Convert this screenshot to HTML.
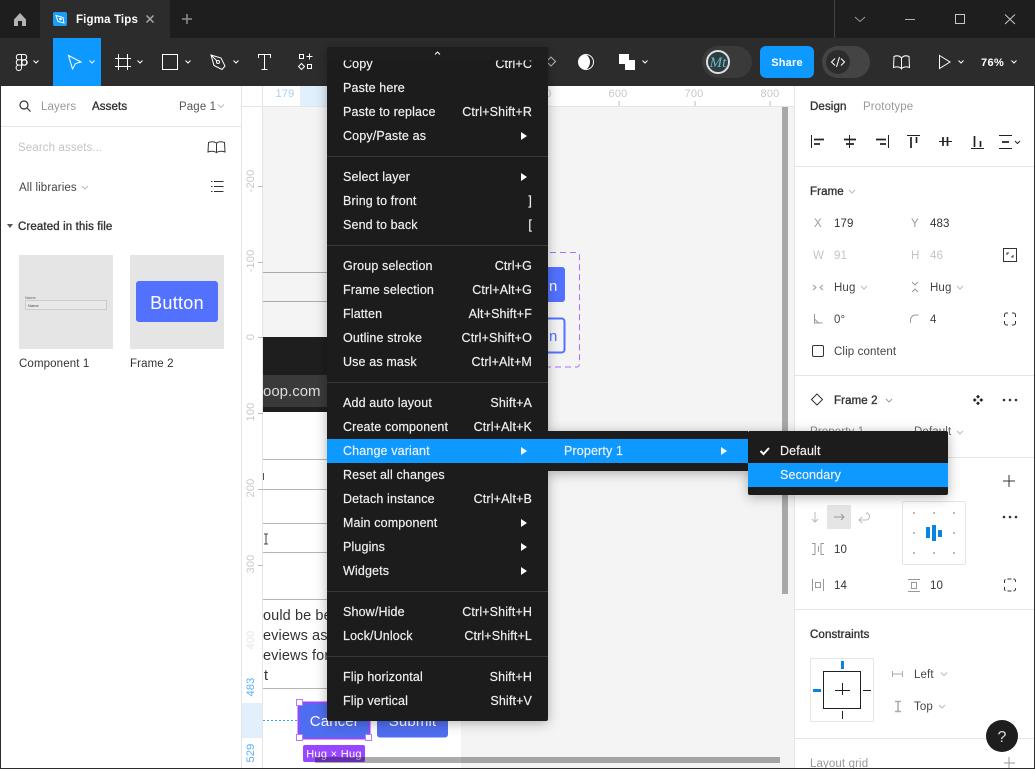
<!DOCTYPE html>
<html><head><meta charset="utf-8"><style>
html,body{margin:0;padding:0;background:#fff;width:1035px;height:769px;overflow:hidden}
svg{display:block;position:absolute;left:0;top:0}
text{font-family:"Liberation Sans",sans-serif;font-size:11.5px;letter-spacing:.12px;fill:#333}
.m{font-size:12.5px;letter-spacing:.14px;fill:#f0f0f0;stroke:#f0f0f0;stroke-width:.18px}
.e{text-anchor:end}
.g{fill:#999}
.lg{fill:#c4c4c4}
.b{stroke:#333;stroke-width:.35px;fill:#333}
.wb{font-weight:bold;fill:#fff}
.w{fill:#fff}
.c{fill:none;stroke:#fff;stroke-width:1}
.d{fill:none;stroke:#333;stroke-width:1}
.gc{fill:none;stroke:#999;stroke-width:1}
.lc{fill:none;stroke:#bbb;stroke-width:1}
.r{font-size:11px;fill:#c8c8c8;letter-spacing:.2px;text-anchor:middle}
.rb{font-size:11px;fill:#5bb0f5;letter-spacing:.2px;text-anchor:middle}
.f{font-size:14.5px;letter-spacing:.1px;fill:#333}
.s{fill:#ccc;}
</style></head><body>
<svg width="1035" height="769" viewBox="0 0 1035 769">
<defs><filter id="sh" x="-10%" y="-10%" width="120%" height="120%"><feDropShadow dx="0" dy="2" stdDeviation="6" flood-color="#000" flood-opacity=".3"/></filter></defs>
<!-- chrome -->
<rect width="1035" height="769" fill="#fff"/>
<rect width="1035" height="38" fill="#1e1e1e"/>
<rect x="40" width="130" height="38" fill="#2c2c2c"/>
<rect y="38" width="1035" height="48" fill="#2c2c2c"/>
<path d="M14 19.500 20 13l6 6.500V26h-4v-5h-4v5h-4z" fill="#b3b3b3"/>
<rect x="53" y="12" width="14" height="14" rx="2" fill="#1a9ef5"/>
<path d="M56 15.500 63 17.500 64 23 58 21.500Z" fill="none" stroke="#fff" stroke-width="1"/><circle cx="60.500" cy="19" r="1.300" fill="#fff"/>
<text x="76" y="23" class="wb" style="font-size:11.500px;letter-spacing:.15px">Figma Tips</text>
<path d="M146.500 15.500l7 7m0-7-7 7" fill="none" stroke="#a8a8a8" stroke-width="1.500"/>
<path d="M187 14v10m-5-5h10" fill="none" stroke="#8f8f8f" stroke-width="1.500"/>
<path d="M834.500 0v38" stroke="#444" stroke-width="1"/>
<path d="M855 17l5 4.500 5-4.500" fill="none" stroke="#9a9a9a"/>
<path d="M905 19.500h10" stroke="#b3b3b3"/>
<rect x="955.500" y="14.500" width="9" height="9" fill="none" stroke="#c8c8c8"/>
<path d="M1005 14.500l10 9.500m0-9.500-10 9.500" fill="none" stroke="#c8c8c8"/>

<!-- toolbar -->
<rect x="53" y="38" width="48" height="48" fill="#0d99ff"/>
<path class="c" d="M18.500 54.500h6a2.700 2.700 0 0 1 0 5.300h-6a2.700 2.700 0 0 1 0-5.300zM18.500 59.800h6a2.700 2.700 0 0 1 0 5.300h-6a2.700 2.700 0 0 1 0-5.300zM21.500 54.500v10.600M21.500 65.100v2.600a2.700 2.700 0 1 1-3-2.600z"/><circle class="c" cx="24.500" cy="62.500" r="2.700"/>
<path class="c" d="M33.500 60.500l2.500 2.500 2.500-2.500M89.500 60.500l2.500 2.500 2.500-2.500M137.500 60.500l2.500 2.500 2.500-2.500M185.500 60.500l2.500 2.500 2.500-2.500M233.500 60.500l2.500 2.500 2.500-2.500"/>
<path class="c" d="M68.500 55.500 81 62l-5.500 1.500-3 5.500z"/>
<path class="c" d="M118.500 54v16M127.500 54v16M115 58.500h16M115 66.500h16"/>
<rect class="c" x="162.500" y="54.500" width="15" height="15"/>
<path class="c" d="M211 55l10 3 4 8-3 3.500-8-4zM211 55l6 6"/><circle class="c" cx="218" cy="62" r="1.500"/>
<path class="c" d="M258.500 58v-3.500h12V58M264.500 54.500V70M261.500 69.500h6"/>
<rect class="c" x="299.500" y="54.500" width="4" height="4"/><path class="c" d="M309.500 53.500v6M306.500 56.500h6"/><path class="c" d="M301.500 63.500l3 3-3 3-3-3z"/><rect class="c" x="307.500" y="64.500" width="4" height="4"/>
<path class="c" d="M551 57l4.500 4.500-4.500 4.500-4.500-4.500z" style="stroke:#bbb"/>
<circle cx="586" cy="62" r="7.500" fill="none" stroke="#fff"/><path d="M586 54.500a7.500 7.500 0 0 0 0 15 9 9 0 0 0 0-15z" fill="#fff"/>
<path d="M619 54h10v6h6v10h-10v-6h-6z" fill="#fff"/>
<path class="c" d="M642.500 60.500l2.500 2.500 2.500-2.500M738.500 60.500l2.500 2.500 2.500-2.500M958.500 60.500l2.500 2.500 2.500-2.500M1011.500 60.500l2.500 2.500 2.500-2.500"/>
<rect x="702" y="46" width="50" height="32" rx="16" fill="#3a3a3a"/>
<circle cx="718" cy="62" r="11" fill="#2e3d40" stroke="#e0e0e0" stroke-width="2"/>
<text x="718" y="67" text-anchor="middle" style="font-family:'Liberation Serif',serif;font-style:italic;font-size:15px;letter-spacing:0;fill:#6fb8c6">Mt</text>
<rect x="760" y="46" width="54" height="32" rx="6" fill="#0d99ff"/>
<text x="787" y="66" text-anchor="middle" class="wb" style="font-size:11px;letter-spacing:.2px">Share</text>
<rect x="822" y="46" width="48" height="32" rx="16" fill="#444"/>
<circle cx="838" cy="62" r="12" fill="#2c2c2c"/>
<path class="c" d="M835 58.500l-3.500 3.500 3.500 3.500M841 58.500l3.500 3.500-3.500 3.500M839.500 57l-3 10"/>
<path class="c" d="M901.500 58c-2-2.500-5-2.500-7.500-1.500l-.5 11c2.500-1 6-1 8 1zM901.500 58c2-2.500 5-2.500 7.500-1.500l.5 11c-2.500-1-6-1-8 1z"/>
<path class="c" d="M939.500 55.500 950 62l-10.500 6.500z"/>
<text x="981" y="66" class="wb" style="font-size:11px;letter-spacing:.4px">76%</text>

<!-- left panel -->
<rect x="0" y="86" width="1" height="683" fill="#2c2c2c"/>
<rect x="241" y="86" width="1" height="683" fill="#e5e5e5"/>
<path d="M1 126.500h240" stroke="#e5e5e5"/>
<circle cx="24" cy="105" r="4" class="d" style="stroke-width:1.200"/><path d="M27 108l3.500 3.500" class="d" style="stroke-width:1.200"/>
<text x="41" y="110" class="g">Layers</text>
<text x="92" y="110" class="b">Assets</text>
<text x="179" y="110" style="fill:#555">Page 1</text>
<path class="lc" d="M218 104.500l3 3 3-3"/>
<text x="18" y="151" class="lg">Search assets...</text>
<path class="d" d="M216.500 143c-2-1.500-5-1.500-8-.5l-.5 9.500c3-1 6-1 8.500.5zM216.500 143c2-1.500 5-1.500 8-.5l.5 9.500c-3-1-6-1-8.500.5z"/>
<text x="19" y="191" style="fill:#444">All libraries</text>
<path class="lc" d="M82 186l3 3 3-3"/>
<path class="d" d="M214 181.500h9.500M214 186.500h9.500M214 191.500h9.500M211 181.500h1.500M211 186.500h1.500M211 191.500h1.500"/>
<path d="M7 224h6l-3 4z" fill="#555"/>
<text x="18" y="230" class="b">Created in this file</text>
<rect x="19" y="255" width="94" height="94" fill="#e5e5e5"/>
<rect x="130" y="255" width="94" height="94" fill="#e5e5e5"/>
<text x="25" y="299" style="font-size:4px;letter-spacing:0;fill:#666">Name</text>
<rect x="25.500" y="300.500" width="81" height="9" fill="#e8e8e8" stroke="#ccc"/>
<text x="28" y="307" style="font-size:4px;letter-spacing:0;fill:#444">Name</text>
<rect x="136" y="281" width="82" height="41" rx="3" fill="#5271ff"/>
<text x="177" y="309" text-anchor="middle" style="font-size:18px;letter-spacing:.3px;fill:#fff">Button</text>
<text x="19" y="367">Component 1</text>
<text x="130" y="367">Frame 2</text>

<!-- canvas -->
<rect x="263" y="106" width="531" height="663" fill="#f4f4f4"/>
<path d="M263 272.500h198M263 301.500h198" stroke="#aaa"/>
<rect x="263" y="337" width="198" height="75" fill="#1e1e1e"/>
<rect x="263" y="375" width="198" height="32" fill="#3a3a3a"/>
<text x="263" y="396" style="font-size:15px;fill:#ddd;letter-spacing:0">oop.com</text>
<rect x="263" y="412" width="198" height="357" fill="#fff"/>
<path d="M263 459.500h198M263 489.500h198M263 523.500h198M263 552.500h198M263 599.500h198M263 688.500h198" stroke="#b5b5b5"/>
<rect x="263" y="473" width="1" height="7" fill="#555"/>
<path d="M264 534h4M266 534v10M264 544h4" stroke="#444" fill="none"/>
<text x="263" y="620" class="f">ould be be</text>
<text x="263" y="640" class="f">eviews as</text>
<text x="263" y="660" class="f">eviews for</text>
<text x="264" y="680" class="f">t</text>
<!-- purple group -->
<path d="M530 252.500h46a3 3 0 0 1 3.500 3.500v108a3 3 0 0 1-3.500 3h-46" fill="none" stroke="#ad6bff" stroke-dasharray="6 4"/>
<rect x="520" y="267" width="45" height="35" rx="3" fill="#5271ff"/>
<text x="549" y="291" class="w" style="font-size:15px">n</text>
<rect x="520" y="318.500" width="44.500" height="34" rx="3" fill="none" stroke="#5271ff" stroke-width="2"/>
<text x="549" y="341" style="font-size:15px;fill:#5271ff">n</text>
<!-- bottom buttons -->
<path d="M263 720.500h35" stroke="#3aa6f5" stroke-dasharray="2 2"/>
<rect x="298.500" y="702.500" width="71" height="36" fill="#4f6df0" stroke="#9747ff" stroke-width="2"/>
<text x="333.500" y="726" text-anchor="middle" class="w" style="font-size:15px">Cancel</text>
<rect x="377" y="704" width="71" height="33.500" rx="3" fill="#4f6df0"/>
<text x="412.500" y="726" text-anchor="middle" class="w" style="font-size:15px">Submit</text>
<g fill="#fff" stroke="#b57bff"><rect x="296.500" y="699.500" width="6" height="6"/><rect x="296.500" y="734.500" width="6" height="6"/><rect x="365.500" y="734.500" width="6" height="6"/></g>
<rect x="303" y="745" width="62" height="17" rx="2" fill="#9747ff"/>
<text x="334" y="757.500" text-anchor="middle" class="w" style="font-size:11px;letter-spacing:.3px">Hug × Hug</text>
<!-- scrollbars -->
<rect x="782" y="106" width="6" height="488" fill="#a8a8a8"/>
<rect x="315" y="757" width="465" height="6" fill="#000" opacity=".33"/>

<!-- rulers -->
<rect x="242" y="86" width="552" height="20" fill="#fff"/>
<rect x="242" y="86" width="21" height="683" fill="#fff"/>
<path d="M242 106.500h552M262.500 86v683" stroke="#e5e5e5"/>
<rect x="300" y="86" width="68" height="20" fill="#e1f0fc"/>
<text x="285" y="97" class="rb" style="fill:#a3d2f7">179</text>
<text x="542" y="97" class="r">500</text><text x="618" y="97" class="r">600</text><text x="694" y="97" class="r">700</text><text x="770" y="97" class="r">800</text>
<path d="M619 101v5M695 101v5M770 101v5" stroke="#bbb"/>
<path stroke="#bbb" d="M258 186.500h5M258 262.500h5M258 337.500h5M258 413.500h5M258 489.500h5M258 565.500h5"/>
<text class="r" transform="translate(254,181) rotate(-90)">-200</text>
<text class="r" transform="translate(254,261) rotate(-90)">-100</text>
<text class="r" transform="translate(254,337) rotate(-90)">0</text>
<text class="r" transform="translate(254,412) rotate(-90)">100</text>
<text class="r" transform="translate(254,488) rotate(-90)">200</text>
<text class="r" transform="translate(254,564) rotate(-90)">300</text>
<text class="r" transform="translate(254,640) rotate(-90)" style="fill:#e6e6e6">400</text>
<rect x="242" y="703" width="20" height="35" fill="#e1f0fc"/>
<text class="rb" transform="translate(254,687) rotate(-90)">483</text>
<text class="rb" transform="translate(254,753) rotate(-90)">529</text>

<!-- right panel -->
<rect x="794" y="86" width="240" height="683" fill="#fff"/>
<path d="M794.500 86v683" stroke="#e5e5e5"/>
<rect x="1034" y="86" width="1" height="683" fill="#2c2c2c"/>
<text x="810" y="110" class="b">Design</text>
<text x="863" y="110" class="g">Prototype</text>
<path d="M795 166.500h239M795 375.500h239M795 457.500h239M795 609.500h239M795 738.500h239" stroke="#e5e5e5"/>
<g fill="none" stroke="#222" stroke-width="1">
<path d="M811.500 135v13M888.500 135v13M849.500 135v13M907 135.500h13M939 141.500h13M971 148.500h13M999 135.500h13M999 148.500h13"/>
<path stroke-width="1.700" d="M814 139.500h10M814 144h6M844 139.500h12M846 144h8M876 139.500h10M880 144h6M911 137v11M916.500 137v6M943 137v9M947.500 137v9M974.500 136v11M980.500 141v6M1002 142h7"/>
<path d="M1015 141l2.500 2.500 2.500-2.500"/>
</g>
<text x="810" y="195" class="b">Frame</text>
<path class="lc" d="M849 190l3 3 3-3"/>
<text x="814" y="227" class="g">X</text><text x="834" y="227">179</text>
<text x="911" y="227" class="g">Y</text><text x="930" y="227">483</text>
<text x="813" y="259" class="lg">W</text><text x="834" y="259" class="lg">91</text>
<text x="911" y="259" class="lg">H</text><text x="930" y="259" class="lg">46</text>
<rect x="1003.500" y="248.500" width="13" height="13" fill="none" stroke="#333"/>
<path d="M1007 255v-2h2M1013 255v2h-2" class="d"/>
<path class="gc" d="M813 285l3 2.500-3 2.500M823 285l-3 2.500 3 2.500"/>
<path class="gc" d="M912 282l3 3 3-3M912 292l3-3 3 3"/>
<text x="834" y="291" style="fill:#444">Hug</text><path class="lc" d="M861 286l3 3 3-3"/>
<text x="930" y="291" style="fill:#444">Hug</text><path class="lc" d="M957 286l3 3 3-3"/>
<path class="gc" d="M814.500 314v9h8M814.500 319l4 4"/>
<text x="834" y="323" style="fill:#444">0°</text>
<path class="gc" d="M910.500 323v-3a5 5 0 0 1 5-5h3"/>
<text x="930" y="323" style="fill:#444">4</text>
<path class="d" d="M1004.500 317v-2a2 2 0 0 1 2-2h1.500M1012 313h1.500a2 2 0 0 1 2 2v2M1015.500 321v2a2 2 0 0 1-2 2H1012M1008 325h-1.500a2 2 0 0 1-2-2v-2"/>
<rect x="812.500" y="345.500" width="11" height="11" rx="1.500" fill="none" stroke="#333"/>
<text x="834" y="355" style="fill:#444">Clip content</text>
<path class="d" d="M817 394l5.500 5.500-5.500 5.500-5.500-5.500z"/>
<text x="834" y="404" class="b">Frame 2</text>
<path class="gc" d="M886 399l3 3 3-3"/>
<path fill="#222" d="M978 394.800l1.900 1.900-1.900 1.900-1.900-1.900zM978 401.400l1.900 1.900-1.900 1.900-1.900-1.900zM974.700 398.100l1.900 1.900-1.900 1.900-1.900-1.900zM981.300 398.100l1.900 1.900-1.900 1.900-1.900-1.900z"/>
<g fill="#333"><circle cx="1004" cy="400" r="1.300"/><circle cx="1010" cy="400" r="1.300"/><circle cx="1016" cy="400" r="1.300"/></g>
<text x="810" y="435" style="fill:#888">Property 1</text>
<text x="914" y="435" style="fill:#666">Default</text>
<path class="lc" d="M957 431l3 3 3-3"/>
<path d="M1009 475v12M1003 481h12" stroke="#333" fill="none"/>
<path d="M815 512v10M812 519l3 3 3-3" class="lc"/>
<rect x="827" y="505" width="24" height="24" rx="1" fill="#e5e5e5"/>
<path d="M834 517h10M841 514l3 3-3 3" class="gc"/>
<path d="M868 513h-2a3 3 0 0 1 0 7h-7M862 517l-3 3 3 3" class="lc"/>
<rect x="902.500" y="501.500" width="63" height="63" rx="1.500" fill="#fff" stroke="#e5e5e5"/>
<g fill="#bbb"><rect x="913" y="512" width="2" height="2"/><rect x="933" y="512" width="2" height="2"/><rect x="953" y="512" width="2" height="2"/><rect x="913" y="532" width="2" height="2"/><rect x="953" y="532" width="2" height="2"/><rect x="913" y="552" width="2" height="2"/><rect x="933" y="552" width="2" height="2"/><rect x="953" y="552" width="2" height="2"/></g>
<g fill="#0a84e0"><rect x="926" y="527" width="4" height="11" rx=".5"/><rect x="932" y="525" width="4" height="16" rx=".5"/><rect x="938" y="530" width="4" height="7" rx=".5"/></g>
<g fill="#333"><circle cx="1004" cy="517" r="1.300"/><circle cx="1010" cy="517" r="1.300"/><circle cx="1016" cy="517" r="1.300"/></g>
<path class="gc" d="M812 543.500h3v11h-3M824 543.500h-3v11h3M818.500 546v6"/>
<text x="834" y="553">10</text>
<path class="gc" d="M812.500 579v12M823.500 579v12"/><rect x="815.500" y="582.500" width="5" height="5" class="gc"/>
<text x="834" y="589">14</text>
<path class="gc" d="M908 579.500h12M908 591.500h12"/><rect x="911.500" y="582.500" width="5" height="6" class="gc"/>
<text x="930" y="589">10</text>
<path class="d" d="M1004.500 583v-2a2 2 0 0 1 2-2h7a2 2 0 0 1 2 2v2M1004.500 587v2a2 2 0 0 0 2 2h7a2 2 0 0 0 2-2v-2" stroke-dasharray="4 2"/>
<text x="810" y="638" class="b">Constraints</text>
<rect x="810.500" y="658.500" width="63" height="63" rx="1.500" fill="#fff" stroke="#e5e5e5"/>
<rect x="823.500" y="671.500" width="37" height="37" fill="none" stroke="#222"/>
<path d="M842.500 683v12M835 690.500h15M863 690.500h8M842.500 711v8" stroke="#222" fill="none"/>
<rect x="841" y="661" width="3" height="8" fill="#0a84e0"/>
<rect x="813" y="689" width="8" height="3" fill="#0a84e0"/>
<path class="lc" d="M892.500 671v6M902.500 671v6M892.500 674h10" style="stroke:#aaa"/>
<text x="914" y="678" style="fill:#444">Left</text>
<path class="lc" d="M941 672.500l3 3 3-3"/>
<path class="lc" d="M895 701.500h6M895 711.500h6M898 701.500v10" style="stroke:#aaa;stroke-width:1.500"/>
<text x="914" y="710" style="fill:#444">Top</text>
<path class="lc" d="M939 705l3 3 3-3"/>
<text x="810" y="767" class="g">Layout grid</text>
<path class="gc" d="M1009 757v11M1004 763h11"/>
<rect x="0" y="768" width="1035" height="1" fill="#2c2c2c"/>
<circle cx="1002" cy="736" r="16" fill="#1e1e1e"/>
<text x="1002" y="742" text-anchor="middle" class="w" style="font-size:16px;letter-spacing:0;fill:#ddd">?</text>

<!-- menus -->
<g filter="url(#sh)">
<rect x="548" y="431" width="200" height="40" fill="#1e1e1e"/>
<rect x="748" y="431" width="200" height="64" rx="2" fill="#1e1e1e"/>
<rect x="327" y="47" width="221" height="674" rx="2" fill="#1e1e1e"/>
</g>
<rect x="327" y="439" width="221" height="24" fill="#0d99ff"/>
<rect x="548" y="439" width="200" height="24" fill="#0d99ff"/>
<rect x="748" y="463" width="200" height="24" fill="#0d99ff"/>
<path d="M327 156.500h221M327 245.500h221M327 382.500h221M327 591.500h221M327 656.500h221" stroke="#383838"/>
<text x="343" y="68" class="m">Copy</text><text x="532" y="68" class="m e">Ctrl+C</text>
<rect x="327" y="47" width="221" height="13.500" rx="2" fill="#1e1e1e"/>
<path class="c" d="M435 54.500l2.500-2.500 2.500 2.500"/>
<text x="343" y="92" class="m">Paste here</text>
<text x="343" y="116" class="m">Paste to replace</text><text x="532" y="116" class="m e">Ctrl+Shift+R</text>
<text x="343" y="140" class="m">Copy/Paste as</text>
<text x="343" y="181" class="m">Select layer</text>
<text x="343" y="205" class="m">Bring to front</text><text x="532" y="205" class="m e">]</text>
<text x="343" y="229" class="m">Send to back</text><text x="532" y="229" class="m e">[</text>
<text x="343" y="270" class="m">Group selection</text><text x="532" y="270" class="m e">Ctrl+G</text>
<text x="343" y="294" class="m">Frame selection</text><text x="532" y="294" class="m e">Ctrl+Alt+G</text>
<text x="343" y="318" class="m">Flatten</text><text x="532" y="318" class="m e">Alt+Shift+F</text>
<text x="343" y="342" class="m">Outline stroke</text><text x="532" y="342" class="m e">Ctrl+Shift+O</text>
<text x="343" y="366" class="m">Use as mask</text><text x="532" y="366" class="m e">Ctrl+Alt+M</text>
<text x="343" y="407" class="m">Add auto layout</text><text x="532" y="407" class="m e">Shift+A</text>
<text x="343" y="431" class="m">Create component</text><text x="532" y="431" class="m e">Ctrl+Alt+K</text>
<text x="343" y="455" class="m">Change variant</text>
<text x="343" y="479" class="m">Reset all changes</text>
<text x="343" y="503" class="m">Detach instance</text><text x="532" y="503" class="m e">Ctrl+Alt+B</text>
<text x="343" y="527" class="m">Main component</text>
<text x="343" y="551" class="m">Plugins</text>
<text x="343" y="575" class="m">Widgets</text>
<text x="343" y="616" class="m">Show/Hide</text><text x="532" y="616" class="m e">Ctrl+Shift+H</text>
<text x="343" y="640" class="m">Lock/Unlock</text><text x="532" y="640" class="m e">Ctrl+Shift+L</text>
<text x="343" y="681" class="m">Flip horizontal</text><text x="532" y="681" class="m e">Shift+H</text>
<text x="343" y="705" class="m">Flip vertical</text><text x="532" y="705" class="m e">Shift+V</text>
<path fill="#fff" d="M521 132v8l6-4zM521 173v8l6-4zM521 447v8l6-4zM521 519v8l6-4zM521 543v8l6-4zM521 567v8l6-4zM721 447v8l6-4z"/>
<text x="564" y="455" class="m">Property 1</text>
<path d="M760.500 451l3 3 5.500-6" fill="none" stroke="#fff" stroke-width="2"/>
<text x="780" y="455" class="m">Default</text>
<text x="780" y="479" class="m">Secondary</text>
</svg>
</body></html>
